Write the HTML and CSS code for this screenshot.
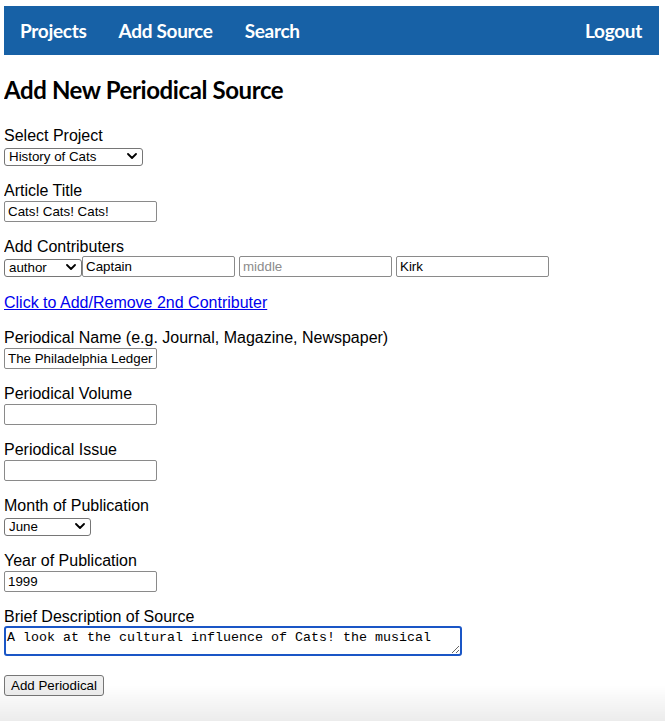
FILE: index.html
```html
<!DOCTYPE html>
<html lang="en">
<head>
<meta charset="utf-8">
<title>Add New Periodical Source</title>
<link rel="stylesheet" href="styles.css">
</head>
<body>
<nav class="topnav">
  <div class="nav-left">
    <a class="nav-link" href="#">Projects</a>
    <a class="nav-link" href="#">Add Source</a>
    <a class="nav-link" href="#">Search</a>
  </div>
  <a class="nav-link" href="#">Logout</a>
</nav>

<main class="page">
  <h1 class="title">Add New Periodical Source</h1>

  <form class="form">
    <div class="field field-select">
      <label class="label">Select Project</label>
      <span class="select-wrap sel-project">
        <select class="select"><option>History of Cats</option></select>
        <svg class="chev" viewBox="0 0 10 6" width="10" height="6"><path d="M1 1l4 4 4-4" fill="none" stroke="#000" stroke-width="1.8" stroke-linecap="round" stroke-linejoin="round"/></svg>
      </span>
    </div>

    <div class="field">
      <label class="label">Article Title</label>
      <input class="text" type="text" value="Cats! Cats! Cats!">
    </div>

    <div class="field">
      <label class="label">Add Contributers</label>
      <div class="contrib-row">
        <span class="select-wrap sel-role">
          <select class="select"><option>author</option></select>
          <svg class="chev" viewBox="0 0 10 6" width="10" height="6"><path d="M1 1l4 4 4-4" fill="none" stroke="#000" stroke-width="1.8" stroke-linecap="round" stroke-linejoin="round"/></svg>
        </span>
        <input class="text" type="text" value="Captain">
        <input class="text gap" type="text" placeholder="middle">
        <input class="text gap" type="text" value="Kirk">
      </div>
    </div>

    <p class="link-row"><a class="add-link" href="#">Click to Add/Remove 2nd Contributer</a></p>

    <div class="field">
      <label class="label">Periodical Name (e.g. Journal, Magazine, Newspaper)</label>
      <input class="text" type="text" value="The Philadelphia Ledger">
    </div>

    <div class="field">
      <label class="label">Periodical Volume</label>
      <input class="text" type="text">
    </div>

    <div class="field">
      <label class="label">Periodical Issue</label>
      <input class="text" type="text">
    </div>

    <div class="field field-select">
      <label class="label">Month of Publication</label>
      <span class="select-wrap sel-month">
        <select class="select"><option>June</option></select>
        <svg class="chev" viewBox="0 0 10 6" width="10" height="6"><path d="M1 1l4 4 4-4" fill="none" stroke="#000" stroke-width="1.8" stroke-linecap="round" stroke-linejoin="round"/></svg>
      </span>
    </div>

    <div class="field">
      <label class="label">Year of Publication</label>
      <input class="text" type="text" value="1999">
    </div>

    <div class="field field-area">
      <label class="label">Brief Description of Source</label>
      <textarea class="area">A look at the cultural influence of Cats! the musical</textarea>
    </div>

    <button class="submit" type="button">Add Periodical</button>
  </form>
</main>
</body>
</html>
```

FILE: styles.css
```css
* { box-sizing: border-box; }

html, body { background: #fff; }

body {
  margin: 6px 6px 0 4px;
  font-family: "Liberation Sans", Arial, sans-serif;
  font-size: 16px;
  color: #000;
  min-height: 715px;
}

body::after {
  content: "";
  position: fixed;
  left: 0;
  right: 0;
  bottom: 0;
  height: 36px;
  background: linear-gradient(to bottom, rgba(0,0,0,0), rgba(0,0,0,0.075));
  pointer-events: none;
}

.topnav {
  display: flex;
  justify-content: space-between;
  align-items: center;
  height: 49px;
  background: #1761a6;
  padding: 0 17px 0 16px;
}

.nav-left {
  display: flex;
  gap: 32px;
}

.nav-link {
  color: #fff;
  text-decoration: none;
  font-family: Lato, "Noto Sans", sans-serif;
  font-weight: 700;
  font-size: 19px;
  line-height: 24px;
  letter-spacing: -0.3px;
}

.title {
  margin: 20px 0 22px;
  font-family: Lato, "Noto Sans", sans-serif;
  font-weight: 700;
  font-size: 24px;
  line-height: 30px;
  letter-spacing: -0.4px;
}

.form {
  display: flex;
  flex-direction: column;
  align-items: flex-start;
}

.field {
  display: flex;
  flex-direction: column;
  align-items: flex-start;
  margin-bottom: 16px;
}

.field-select { margin-bottom: 17px; }

.label {
  display: block;
  line-height: 18px;
  height: 18px;
}

.text {
  margin-top: 1px;
  width: 153px;
  height: 21px;
  padding: 1px 3px;
  border: 1px solid #8a8a8a;
  border-radius: 2px;
  font-family: "Liberation Sans", Arial, sans-serif;
  font-size: 13.33px;
  color: #000;
  background: #fff;
}

.text::placeholder { color: #8c8c8c; }

.select-wrap {
  position: relative;
  display: inline-block;
  margin-top: 2px;
  height: 18px;
}

.select {
  -webkit-appearance: none;
  appearance: none;
  width: 100%;
  height: 18px;
  padding: 0 18px 0 4px;
  border: 1px solid #767676;
  border-radius: 3px;
  background: #fff;
  font-family: "Liberation Sans", Arial, sans-serif;
  font-size: 13.33px;
  line-height: 16px;
  color: #000;
}

.chev {
  position: absolute;
  right: 6px;
  top: 6px;
  pointer-events: none;
}

.sel-project { width: 139px; }
.sel-month { width: 87px; }
.sel-role { width: 78px; margin-top: 2px; }

.contrib-row {
  display: flex;
  align-items: flex-start;
}

.contrib-row .text { margin-top: 0; }
.contrib-row .gap { margin-left: 4px; }

.link-row {
  margin: 1px 0 17px;
  line-height: 18px;
}

.add-link {
  color: #0000ee;
  text-decoration: underline;
}

.field-area { margin-bottom: 19px; }

.area {
  margin-top: 0;
  width: 458px;
  height: 30px;
  padding: 2px 1px;
  border: 2px solid #1a56c6;
  border-radius: 3px;
  font-family: "Liberation Mono", "DejaVu Sans Mono", monospace;
  font-size: 13.33px;
  line-height: 15px;
  color: #000;
  resize: vertical;
  outline: none;
}

.submit {
  height: 21px;
  padding: 0 6px;
  border: 1px solid #767676;
  border-radius: 3px;
  background: #efefef;
  font-family: "Liberation Sans", Arial, sans-serif;
  font-size: 13.33px;
  color: #000;
  line-height: 18px;
}
```
